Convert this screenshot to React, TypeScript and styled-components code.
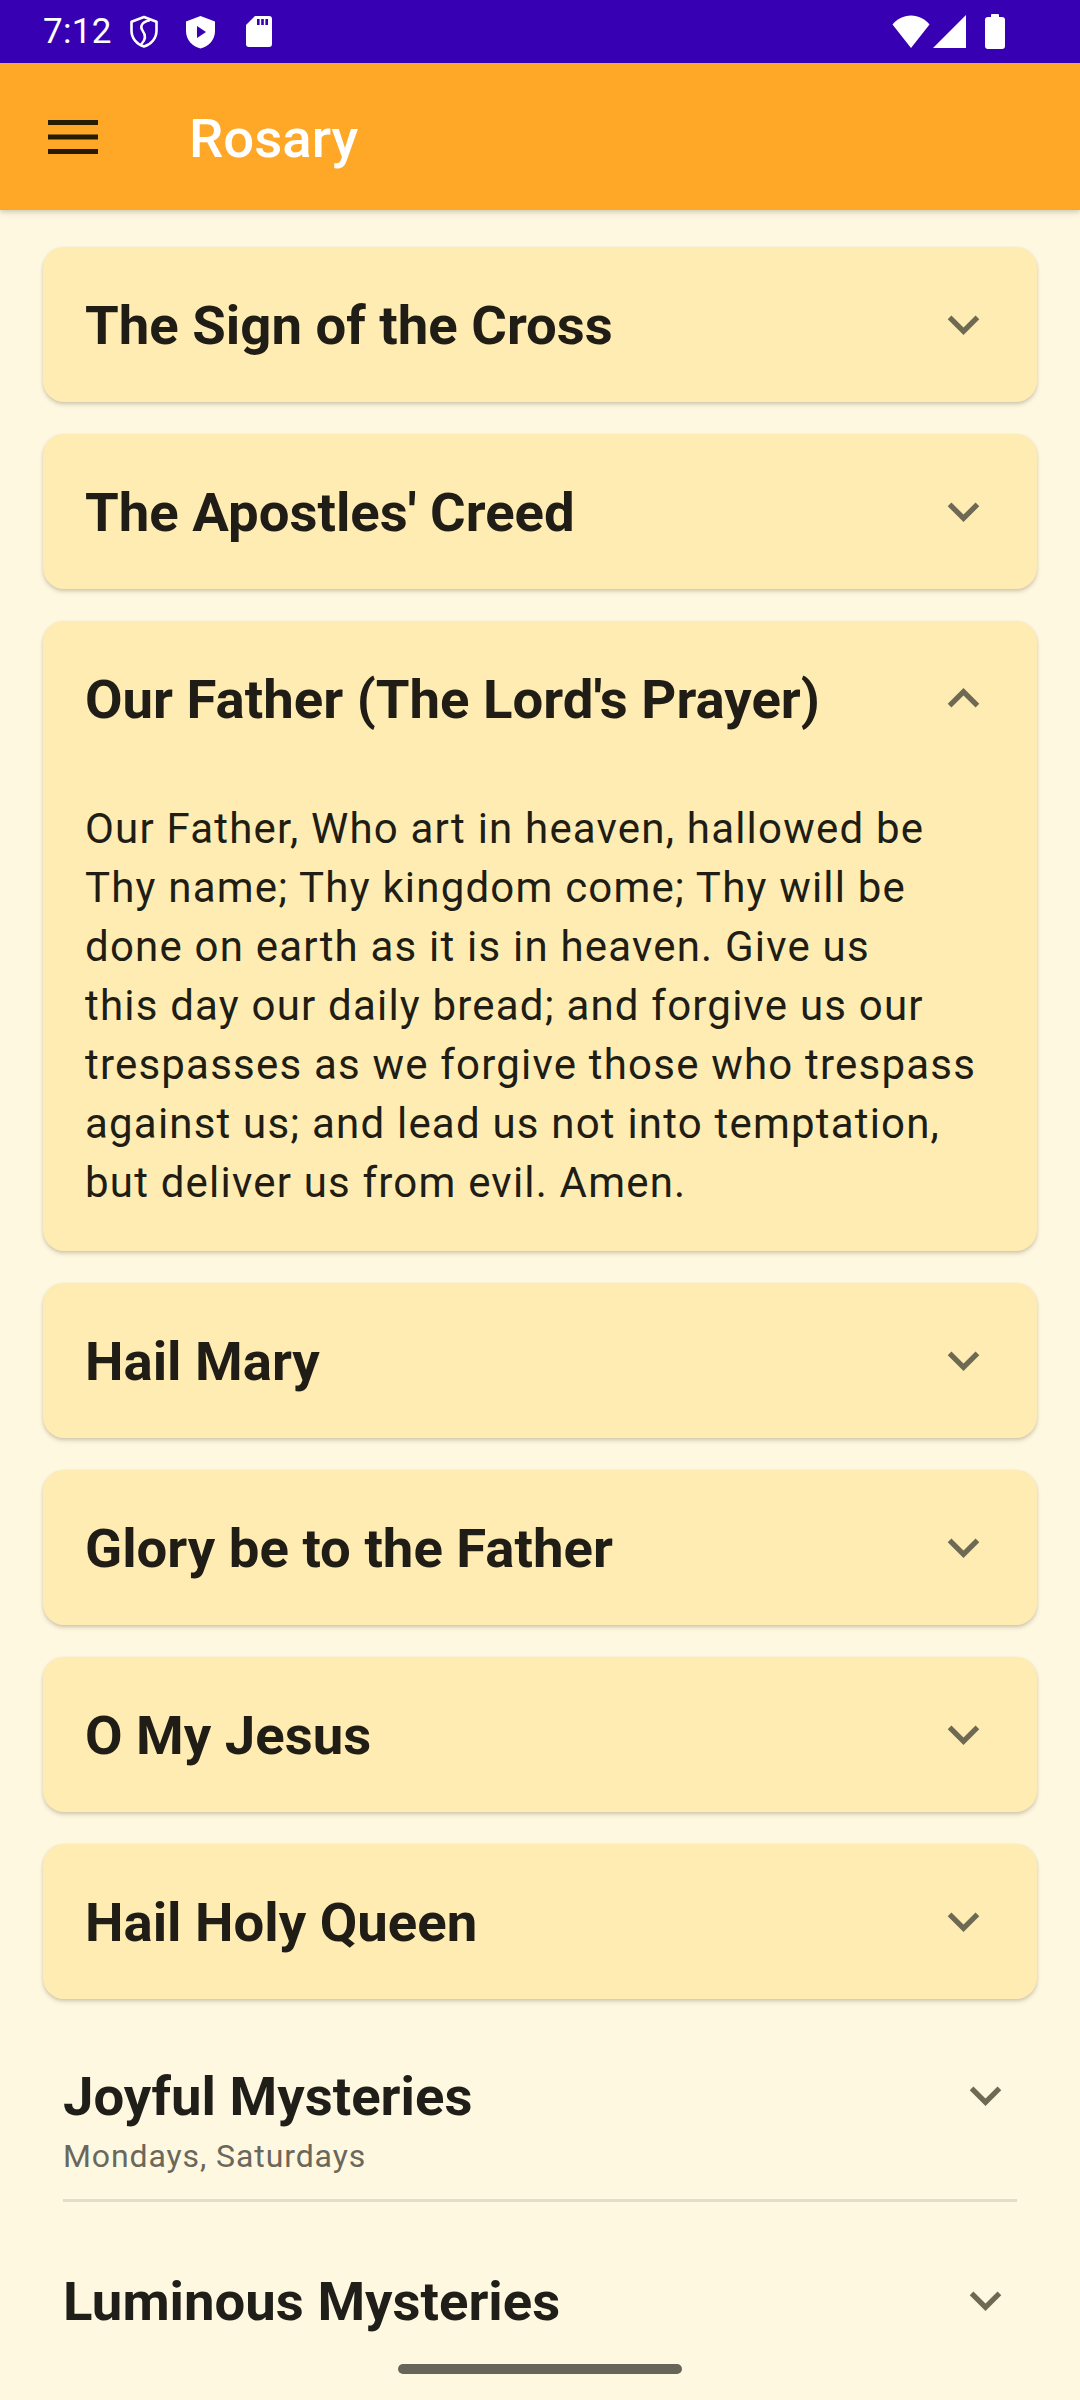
import React from "react";
import styled, { createGlobalStyle } from "styled-components";

const GlobalStyle = createGlobalStyle`
  html, body { margin: 0; padding: 0; background: #fff8e1; }
  body { font-family: Roboto, "Noto Sans", "Liberation Sans", sans-serif; }
  * { box-sizing: border-box; }
`;

const Screen = styled.div`
  position: relative;
  width: 1080px;
  height: 2400px;
  overflow: hidden;
  background: #fff8e1;
  display: flex;
  flex-direction: column;
`;

const StatusBar = styled.div`
  height: 63px;
  flex: none;
  background: #3700b3;
  display: flex;
  align-items: center;
  justify-content: space-between;
  padding: 0 75px 0 43px;
  color: #ffffff;
`;

const StatusGroup = styled.div`
  display: flex;
  align-items: center;
`;

const Time = styled.span`
  font-family: Roboto, sans-serif;
  font-size: 35px;
  line-height: 63px;
  letter-spacing: 0.3px;
`;

const StatusIcon = styled.svg<{ $ml: number }>`
  display: block;
  flex: none;
  margin-left: ${(p) => p.$ml}px;
`;

const AppBar = styled.header`
  position: relative;
  z-index: 2;
  height: 147px;
  flex: none;
  background: #ffa726;
  display: flex;
  align-items: center;
  padding-left: 48px;
  box-shadow: 0 2px 4px rgba(0, 0, 0, 0.14), 0 4px 8px rgba(0, 0, 0, 0.06);
`;

const MenuIcon = styled.svg`
  display: block;
  flex: none;
`;

const AppTitle = styled.h1`
  margin: 2px 0 0 91px;
  font-family: Roboto, sans-serif;
  font-size: 54.5px;
  font-weight: 500;
  color: #ffffff;
  letter-spacing: 0;
`;

const Content = styled.main`
  display: flex;
  flex-direction: column;
`;

const CardList = styled.div`
  display: flex;
  flex-direction: column;
  gap: 32px;
  padding: 37px 43px 0;
`;

const Card = styled.section`
  background: #ffecb3;
  border-radius: 21px;
  box-shadow: 0 3px 4px rgba(60, 50, 20, 0.16), 0 1px 3px rgba(60, 50, 20, 0.12);
  padding: 0 42px;
`;

const CardHeader = styled.div`
  height: 155px;
  display: flex;
  align-items: center;
  justify-content: space-between;
`;

const CardTitle = styled.h2`
  margin: 2px 0 0;
  font-family: Roboto, sans-serif;
  font-size: 54.5px;
  font-weight: 700;
  color: #1f1d15;
  line-height: 1.17;
`;

const CardBody = styled.p`
  margin: 0;
  padding: 23px 0 39px;
  font-family: Roboto, sans-serif;
  font-size: 42px;
  line-height: 59px;
  letter-spacing: 1.2px;
  color: #201d14;
`;

const Chevron = styled.svg<{ $tone?: string }>`
  display: block;
  flex: none;
  width: 63px;
  height: 63px;
  fill: ${(p) => p.$tone || "#6e6953"};
`;

const MysteryItem = styled.div<{ $divider?: boolean }>`
  margin: 0 63px;
  padding: ${(p) => (p.$divider ? "65px 0 24px" : "67px 0 0")};
  border-bottom: ${(p) => (p.$divider ? "3px solid #e2dccb" : "none")};
`;

const MysteryRow = styled.div`
  display: flex;
  align-items: center;
  justify-content: space-between;
`;

const MysteryTitle = styled.h3`
  margin: 0;
  font-family: Roboto, sans-serif;
  font-size: 54.5px;
  font-weight: 700;
  color: #1f1e19;
  line-height: 62px;
`;

const MysterySubtitle = styled.div`
  margin-top: 10px;
  font-family: Roboto, sans-serif;
  font-size: 32px;
  line-height: 38px;
  letter-spacing: 0.9px;
  color: #6a675b;
`;

const NavHandle = styled.div`
  position: absolute;
  left: 398px;
  top: 2364px;
  width: 284px;
  height: 10px;
  border-radius: 5px;
  background: #67645a;
`;

const ExpandMore = () => (
  <Chevron viewBox="0 0 24 24">
    <path d="M16.59 8.59L12 13.17 7.41 8.59 6 10l6 6 6-6z" />
  </Chevron>
);

const ExpandLess = () => (
  <Chevron viewBox="0 0 24 24">
    <path d="M12 8l-6 6 1.41 1.41L12 10.83l4.59 4.58L18 14z" />
  </Chevron>
);

type Prayer = { title: string; lines?: string[] };

const prayers: Prayer[] = [
  { title: "The Sign of the Cross" },
  { title: "The Apostles' Creed" },
  {
    title: "Our Father (The Lord's Prayer)",
    lines: [
      "Our Father, Who art in heaven, hallowed be",
      "Thy name; Thy kingdom come; Thy will be",
      "done on earth as it is in heaven. Give us",
      "this day our daily bread; and forgive us our",
      "trespasses as we forgive those who trespass",
      "against us; and lead us not into temptation,",
      "but deliver us from evil. Amen.",
    ],
  },
  { title: "Hail Mary" },
  { title: "Glory be to the Father" },
  { title: "O My Jesus" },
  { title: "Hail Holy Queen" },
];

const PrayerCard = ({ prayer }: { prayer: Prayer }) => (
  <Card>
    <CardHeader>
      <CardTitle>{prayer.title}</CardTitle>
      {prayer.lines ? <ExpandLess /> : <ExpandMore />}
    </CardHeader>
    {prayer.lines && (
      <CardBody>
        {prayer.lines.map((l, i) => (
          <React.Fragment key={i}>
            {l}
            {i < prayer.lines!.length - 1 && <br />}
          </React.Fragment>
        ))}
      </CardBody>
    )}
  </Card>
);

export default function App() {
  return (
    <>
      <GlobalStyle />
      <Screen>
        <StatusBar>
          <StatusGroup>
            <Time>7:12</Time>
            <StatusIcon $ml={17} width="30" height="33" viewBox="0 0 30 33">
              <path
                d="M15 2 L27.5 6.8 V15.5 C27.5 23.5 22 29.5 15 31.5 C8 29.5 2.5 23.5 2.5 15.5 V6.8 Z"
                fill="none"
                stroke="#fff"
                strokeWidth="2.6"
                strokeLinejoin="round"
              />
              <path
                d="M20 5.5 C13 7 10.5 11.5 13.5 15.5 C16.5 19.5 17.5 24 12.5 29"
                fill="none"
                stroke="#fff"
                strokeWidth="2.4"
                strokeLinecap="round"
              />
            </StatusIcon>
            <StatusIcon $ml={25} width="33" height="34" viewBox="0 0 33 34">
              <path
                d="M16.5 1 L31 6.5 V16 C31 25 24.5 31.5 16.5 33.5 C8.5 31.5 2 25 2 16 V6.5 Z"
                fill="#fff"
              />
              <path d="M13 11 L22 17 L13 23 Z" fill="#3700b3" />
            </StatusIcon>
            <StatusIcon $ml={29} width="26" height="31" viewBox="0 0 26 31">
              <path
                d="M9 0 H23 A3 3 0 0 1 26 3 V28 A3 3 0 0 1 23 31 H3 A3 3 0 0 1 0 28 V9 Z"
                fill="#fff"
              />
              <rect x="11" y="3" width="2.6" height="6" fill="#3700b3" />
              <rect x="15.2" y="3" width="2.6" height="6" fill="#3700b3" />
              <rect x="19.4" y="3" width="2.6" height="6" fill="#3700b3" />
            </StatusIcon>
          </StatusGroup>
          <StatusGroup>
            <StatusIcon $ml={0} width="38" height="33" viewBox="0 0 38 33">
              <path
                d="M19 33 L0.5 9.5 C5 4 11.5 0.5 19 0.5 C26.5 0.5 33 4 37.5 9.5 Z"
                fill="#fff"
              />
            </StatusIcon>
            <StatusIcon $ml={3} width="33" height="33" viewBox="0 0 33 33">
              <path d="M33 0 V33 H0 Z" fill="#fff" />
            </StatusIcon>
            <StatusIcon $ml={19} width="20" height="35" viewBox="0 0 20 35">
              <rect x="6" y="0" width="8" height="4" rx="1" fill="#fff" />
              <rect x="0" y="3" width="20" height="32" rx="3" fill="#fff" />
            </StatusIcon>
          </StatusGroup>
        </StatusBar>

        <AppBar>
          <MenuIcon width="50" height="34" viewBox="0 0 50 34">
            <rect x="0" y="0" width="50" height="5" fill="#261c00" />
            <rect x="0" y="14.5" width="50" height="5" fill="#261c00" />
            <rect x="0" y="29" width="50" height="5" fill="#261c00" />
          </MenuIcon>
          <AppTitle>Rosary</AppTitle>
        </AppBar>

        <Content>
          <CardList>
            {prayers.map((p) => (
              <PrayerCard key={p.title} prayer={p} />
            ))}
          </CardList>

          <MysteryItem $divider>
            <MysteryRow>
              <MysteryTitle>Joyful Mysteries</MysteryTitle>
              <ExpandMore />
            </MysteryRow>
            <MysterySubtitle>Mondays, Saturdays</MysterySubtitle>
          </MysteryItem>

          <MysteryItem>
            <MysteryRow>
              <MysteryTitle>Luminous Mysteries</MysteryTitle>
              <ExpandMore />
            </MysteryRow>
          </MysteryItem>
        </Content>

        <NavHandle />
      </Screen>
    </>
  );
}
